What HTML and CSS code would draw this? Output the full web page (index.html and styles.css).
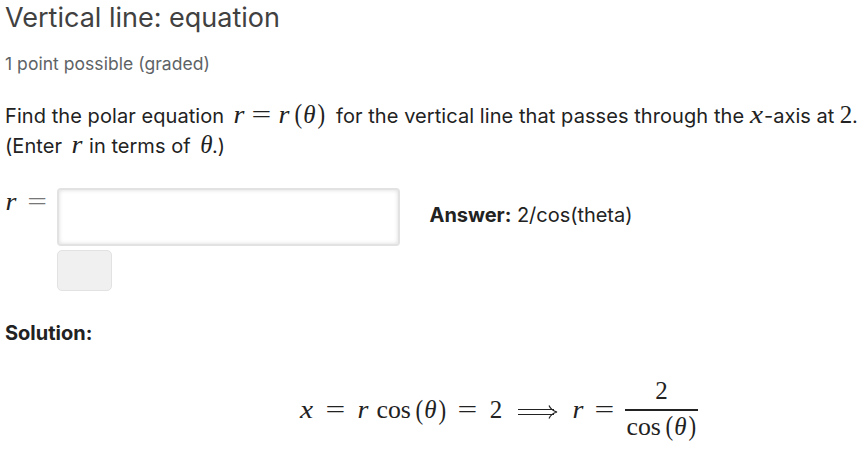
FILE: index.html
```html
<!DOCTYPE html>
<html lang="en">
<head>
<meta charset="utf-8">
<title>Vertical line: equation</title>
<link rel="stylesheet" href="styles.css">
</head>
<body>
<main class="problem">
  <h3 class="title">Vertical line: equation</h3>
  <div class="progress">1 point possible (graded)</div>
  <div class="prompt">
    <div class="line"><span class="t-find">Find the polar equation</span><span class="math m-def"><i class="r">r</i><span class="eq">=</span><i class="r">r</i><span class="par open">(</span><i class="theta">θ</i><span class="par">)</span></span><span class="t-for">for the vertical line that passes through the</span><span class="math"><i class="x">x</i></span><span class="t-axis">-axis at</span><span class="math"><span class="num">2</span></span><span class="stop">.</span></div>
    <div class="line"><span class="t-enter">(Enter</span><span class="math m-r"><i class="r">r</i></span><span class="t-terms">in terms of</span><span class="math"><i class="theta">θ</i></span><span class="t-end">.)</span></div>
  </div>
  <div class="answer-row">
    <div class="math label"><i class="r">r</i><span class="eq gray">=</span></div>
    <div class="field"><input class="input" type="text" aria-label="r"><div class="preview"></div></div>
    <p class="answer"><b>Answer:</b> 2/cos(theta)</p>
  </div>
  <div class="solution">Solution:</div>
  <div class="math display">
    <i class="x">x</i><span class="eq wide">=</span><i class="r">r</i><span class="cos">cos</span><span class="par open">(</span><i class="theta">θ</i><span class="par">)</span><span class="eq wide">=</span><span class="num">2</span>
    <svg class="arrow" viewBox="0 0 40 16" role="img" aria-label="implies"><path d="M0 5.5H36M0 10.5H36M31 1.5C32.5 5 35 7 39 8C35 9 32.5 11 31 14.5"/></svg>
    <i class="r">r</i><span class="eq last">=</span>
    <span class="frac"><span class="num">2</span><span class="den"><span class="cos">cos</span><span class="par open">(</span><i class="theta">θ</i><span class="par">)</span></span></span>
  </div>
</main>
</body>
</html>
```
FILE: styles.css
```css
* { box-sizing: border-box; }
body { margin: 0; background: #fff; color: #222; font: 20px/30px Inter, sans-serif; }
.problem { width: 861px; height: 451px; padding-left: 5px; overflow: hidden; }
.title { margin: 0; padding-top: 2px; height: 48px; font-size: 27px; line-height: 31px; font-weight: 400; color: #414141; }
.progress { height: 51px; font-size: 17.5px; letter-spacing: .04px; line-height: 32px; color: #5e6366; }
.prompt { height: 62px; letter-spacing: .07px; }
.line { display: flex; height: 31px; align-items: baseline; white-space: nowrap; }
.t-find { width: 228px; }
.m-def { width: 103px; }
.t-for { width: 413px; }
.t-axis { width: 75px; letter-spacing: .03px; }
.stop { margin-left: -1px; }
.t-enter { width: 66px; }
.m-r { width: 18px; }
.t-terms { width: 110px; letter-spacing: .04px; }
.t-end { margin-left: -2px; }
.math { display: inline-flex; align-items: baseline; font-family: "Liberation Serif", serif; font-size: 25px; line-height: 30px; letter-spacing: 0; color: #222; }
.math i, .math .num { display: inline-block; text-align: center; }
.r { width: 12px; transform: scaleX(1.12); }
.x { width: 15px; transform: scaleX(1.18); }
.theta { width: 15px; }
.num { width: 14px; }
.par { width: 8px; text-align: center; font-size: 27px; transform: scaleX(.85); }
.open { margin-left: 5px; }
.m-def .open { margin-left: 4px; }
.eq { width: 31px; text-align: center; transform: scaleX(1.4); }
.m-def .eq { width: 33px; }
.answer-row { display: flex; height: 149px; padding-top: 27px; }
.label { width: 52px; height: 30px; margin-top: -1px; }
.label .eq { width: 41px; }
.gray { color: #777; }
.field { width: 343px; }
.input { display: block; width: 343px; height: 58px; border: 2px solid #e2e2e2; border-radius: 4px; background: #fff; box-shadow: inset 0 0 4px rgba(0,0,0,.15); }
.preview { width: 55px; height: 41px; margin-top: 4px; border: 1px solid #e2e2e2; border-radius: 5px; background: #f0f0f0; }
.answer { margin: 12px 0 0 29.5px; letter-spacing: -.03px; }
.solution { height: 48px; font-weight: 700; line-height: 30px; padding-top: 8px; }
.display { display: flex; width: 402px; height: 80px; margin: 12px 0 0 294px; align-items: center; }
.wide { width: 43px; }
.cos { width: 34px; margin-left: 7px; transform: scaleX(1.03); }
.display > .open { margin-left: 4px; }
.display > .cos { margin-left: 8px; }
.arrow { width: 40px; height: 16px; margin: 3px 14px 0 15px; fill: none; stroke: #222; stroke-width: 1.2; flex: none; }
.last { width: 41px; }
.frac { width: 73px; display: flex; flex-direction: column; align-items: center; }
.frac > .num { height: 33px; }
.den { display: flex; align-items: baseline; width: 73px; height: 35px; border-top: 2px solid #222; }
.den .cos { margin-left: 2px; }
.den .open { margin-left: 4px; }
```
